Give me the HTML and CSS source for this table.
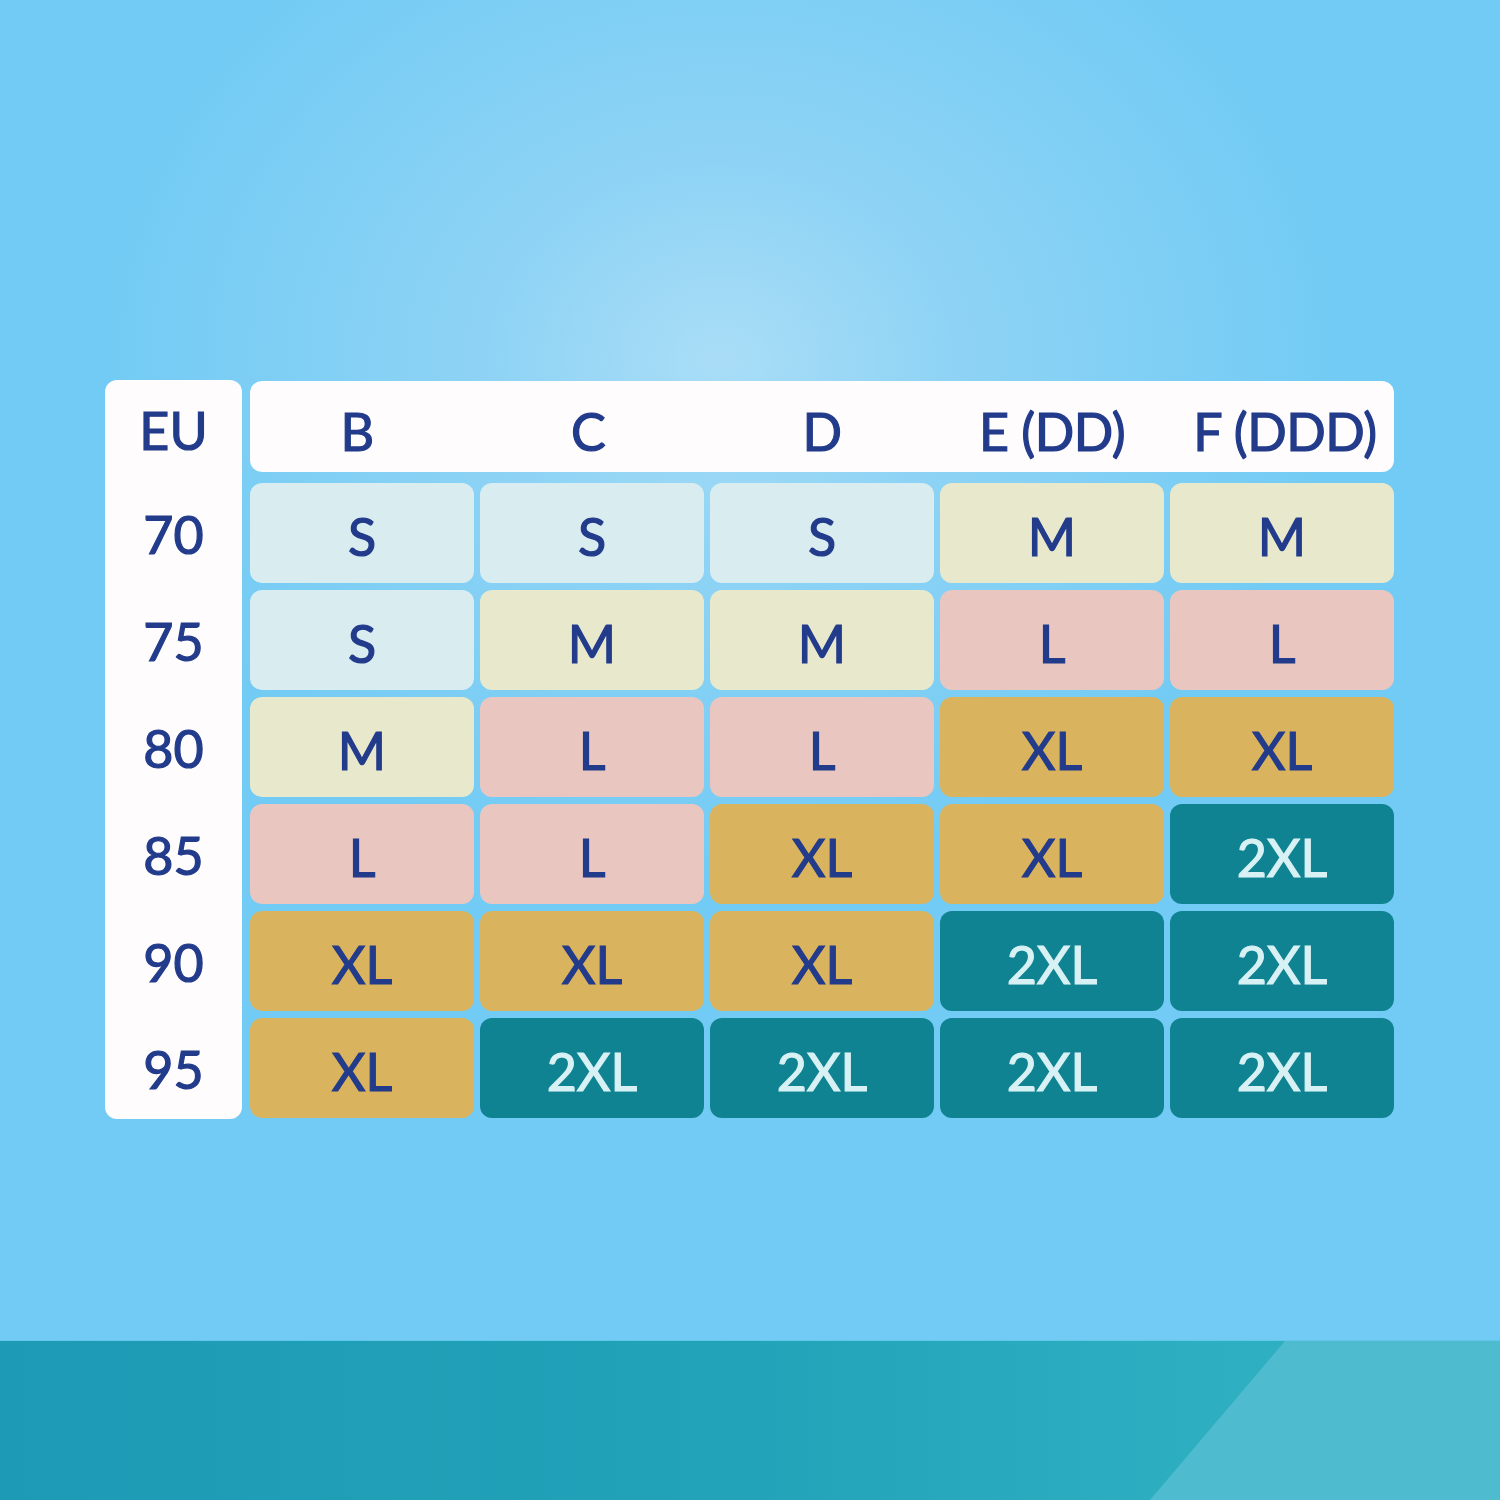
FILE: index.html
```html
<!DOCTYPE html>
<html>
<head>
<meta charset="utf-8">
<link rel="stylesheet" href="styles.css">
</head>
<body>
<div class="page">
  <main class="stage">
    <div class="chart">
      <div class="eu-col">
        <div class="eu-head">EU</div>
        <div class="eu-cell">70</div>
        <div class="eu-cell">75</div>
        <div class="eu-cell">80</div>
        <div class="eu-cell">85</div>
        <div class="eu-cell">90</div>
        <div class="eu-cell">95</div>
      </div>
      <div class="cups">
        <div class="cup-head">
          <div class="h-b">B</div><div class="h-c">C</div><div>D</div><div>E (DD)</div><div class="h-f">F (DDD)</div>
        </div>
        <div class="grid">
          <div class="cell s">S</div><div class="cell s">S</div><div class="cell s">S</div><div class="cell m">M</div><div class="cell m">M</div>
          <div class="cell s">S</div><div class="cell m">M</div><div class="cell m">M</div><div class="cell l">L</div><div class="cell l">L</div>
          <div class="cell m">M</div><div class="cell l">L</div><div class="cell l">L</div><div class="cell xl">XL</div><div class="cell xl">XL</div>
          <div class="cell l">L</div><div class="cell l">L</div><div class="cell xl">XL</div><div class="cell xl">XL</div><div class="cell xxl">2XL</div>
          <div class="cell xl">XL</div><div class="cell xl">XL</div><div class="cell xl">XL</div><div class="cell xxl">2XL</div><div class="cell xxl">2XL</div>
          <div class="cell xl">XL</div><div class="cell xxl">2XL</div><div class="cell xxl">2XL</div><div class="cell xxl">2XL</div><div class="cell xxl">2XL</div>
        </div>
      </div>
    </div>
  </main>
  <footer class="band"><div class="band-light"></div></footer>
</div>
</body>
</html>
```

FILE: styles.css
```css
* { box-sizing: border-box; }
html, body { margin: 0; padding: 0; }
body {
  width: 1500px;
  height: 1500px;
  overflow: hidden;
  font-family: "Lato", "Noto Sans", sans-serif;
  color: #223b8b;
}
.page {
  width: 1500px;
  height: 1500px;
  display: flex;
  flex-direction: column;
}
.stage {
  height: 1340px;
  background:
    radial-gradient(ellipse 620px 520px at 720px 360px, #a9ddf6 0%, #8ed3f5 38%, #72cbf4 100%);
  background-color: #72cbf4;
  padding: 380px 0 0 105px;
}
.chart {
  display: flex;
  gap: 8px;
  align-items: flex-start;
}
.eu-col {
  width: 137px;
  background: #fefcfd;
  border-radius: 12px;
  display: flex;
  flex-direction: column;
  gap: 7px;
  padding-bottom: 1px;
}
.eu-head,
.eu-cell,
.cup-head > div,
.cell {
  display: flex;
  align-items: center;
  justify-content: center;
  font-size: 52px;
  font-weight: 400;
  -webkit-text-stroke: 1.2px currentColor;
  white-space: nowrap;
}
.eu-head {
  height: 96px;
  padding-top: 4px;
}
.eu-cell {
  height: 100px;
  padding-top: 2px;
}
.cups {
  width: 1144px;
  padding-top: 1px;
  display: flex;
  flex-direction: column;
  gap: 11px;
}
.cup-head {
  height: 91px;
  background: #fefcfd;
  border-radius: 12px;
  display: grid;
  grid-template-columns: repeat(5, 1fr);
  column-gap: 6px;
}
.cup-head > div {
  padding-top: 8px;
  letter-spacing: -0.5px;
}
.cup-head > .h-b { padding-right: 10px; }
.cup-head > .h-c { padding-right: 8px; }
.cup-head > .h-f { padding-left: 6px; }
.grid {
  display: grid;
  grid-template-columns: repeat(5, 224px);
  grid-auto-rows: 100px;
  column-gap: 6px;
  row-gap: 7px;
}
.cell {
  border-radius: 12px;
  padding-top: 6px;
}
.s { background: #d9edf1; }
.m { background: #e8e9cc; }
.l { background: #e9c7c0; }
.xl { background: #dab35e; }
.xxl { background: #0f8391; color: #d7f1f4; }
.band {
  position: relative;
  height: 160px;
  background: linear-gradient(90deg, #1d9ab5 0%, #22a3b9 50%, #2fb0c2 85%);
  border-top: 1px solid #64c6e8;
  overflow: hidden;
}
.band-light {
  position: absolute;
  top: 0;
  right: 0;
  bottom: 0;
  width: 350px;
  background: #4fbbce;
  clip-path: polygon(135px 0, 100% 0, 100% 100%, 0 100%);
}
```
